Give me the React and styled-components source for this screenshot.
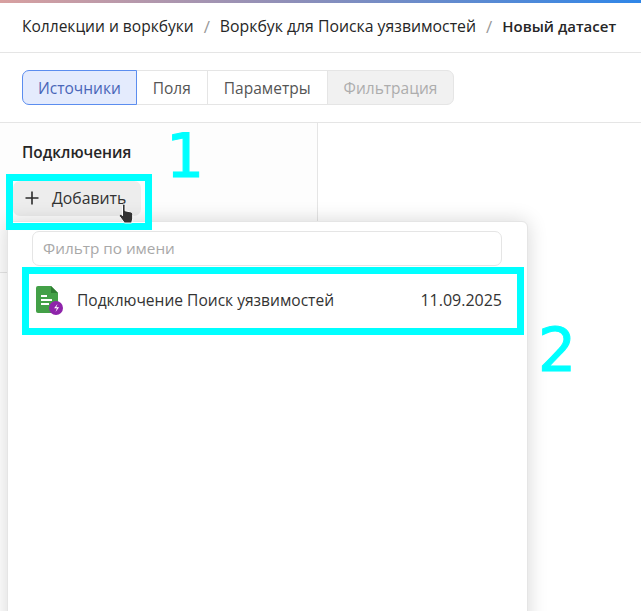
import React from "react";
import styled, { createGlobalStyle } from "styled-components";

const Global = createGlobalStyle`
  html, body { margin: 0; padding: 0; background: #fff; }
  body { font-family: "Open Sans", "Noto Sans", sans-serif; overflow: hidden; }
`;
const Page = styled.div`
  position: relative;
  width: 641px;
  height: 611px;
  overflow: hidden;
  background: #fff;
  color: #2b2b2b;
`;
const TopStripe = styled.div`
  height: 3px;
  background: linear-gradient(90deg, #d8a0a0 0%, #8f8fb8 45%, #2f86e8 100%);
`;
const Breadcrumbs = styled.nav`
  height: 50px;
  box-sizing: border-box;
  border-bottom: 1px solid #e5e5e5;
  padding: 0 0 3px 22px;
  display: flex;
  align-items: center;
`;
const Crumb = styled.span`
  font-weight: ${(p) => (p.$current ? 600 : 400)};
  font-size: ${(p) => p.$size}px;
  color: #262626;
  white-space: nowrap;
`;
const Slash = styled.span`
  color: #999;
  margin: 0 10px;
  font-size: 17px;
`;
const TabsRow = styled.div`
  height: 70px;
  box-sizing: border-box;
  border-bottom: 1px solid #e5e5e5;
  padding: 17px 0 0 22px;
  display: flex;
  align-items: flex-start;
`;
const Tab = styled.div`
  height: 35px;
  box-sizing: border-box;
  display: flex;
  align-items: center;
  padding: 0 ${(p) => (p.$first ? 15 : 16)}px;
  font-size: 15.5px;
  white-space: nowrap;
  margin-left: -1px;
  border: 1px solid ${(p) => (p.$active ? "#5b8def" : "#e5e5e5")};
  background: ${(p) => (p.$active ? "#e4ebfd" : p.$disabled ? "#f1f1f1" : "#fff")};
  color: ${(p) => (p.$active ? "#4a66b8" : p.$disabled ? "#adadad" : "#555")};
  border-radius: ${(p) => (p.$first ? "7px 0 0 7px" : p.$last ? "0 7px 7px 0" : "0")};
  position: relative;
  z-index: ${(p) => (p.$active ? 1 : 0)};
  &:first-child { margin-left: 0; }
`;
const Body = styled.div`
  display: flex;
  height: 488px;
`;
const Sidebar = styled.aside`
  width: 318px;
  height: 150px;
  box-sizing: border-box;
  border-right: 1px solid #e5e5e5;
  border-bottom: 1px solid #e5e5e5;
  background: #fdfdfd;
  padding: 20px 0 0 22px;
`;
const SectionTitle = styled.div`
  font-size: 15.4px;
  line-height: 20px;
  font-weight: 600;
  color: #262626;
`;
const AddButton = styled.div`
  width: 128px;
  height: 35px;
  margin: 18px 0 0 -9px;
  padding: 0 0 1px 11px;
  box-sizing: border-box;
  background: #ededed;
  border-radius: 7px;
  display: flex;
  align-items: center;
  gap: 12px;
  font-size: 15.8px;
  color: #333;
`;
const Popup = styled.div`
  position: absolute;
  left: 7px;
  top: 221px;
  width: 521px;
  height: 420px;
  box-sizing: border-box;
  background: #fff;
  border: 1px solid #e5e5e5;
  border-radius: 6px;
  box-shadow: 0 0 20px rgba(0, 0, 0, 0.16);
  padding: 9px 25px 0 24px;
`;
const FilterInput = styled.div`
  height: 35px;
  box-sizing: border-box;
  border: 1px solid #e5e5e5;
  border-radius: 7px;
  padding: 0 10px 2px;
  display: flex;
  align-items: center;
  font-size: 15.3px;
  color: #a8a8a8;
`;
const ConnRow = styled.div`
  height: 50px;
  margin-top: 9px;
  padding-left: 3px;
  display: flex;
  align-items: center;
  font-size: 15.55px;
  color: #333;
`;
const ConnName = styled.span`
  margin-left: 12px;
  flex: 1;
  white-space: nowrap;
`;
const ConnDate = styled.span`
  font-size: 16px;
  white-space: nowrap;
`;
const Annotation = styled.div`
  position: absolute;
  box-sizing: border-box;
  border: 7px solid #00ffff;
  left: ${(p) => p.$x}px;
  top: ${(p) => p.$y}px;
  width: ${(p) => p.$w}px;
  height: ${(p) => p.$h}px;
`;
const Numeral = styled.div`
  position: absolute;
  left: ${(p) => p.$x}px;
  top: ${(p) => p.$y}px;
  font-size: 60px;
  line-height: 60px;
  font-family: "DejaVu Sans", sans-serif;
  color: #00ffff;
  -webkit-text-stroke: 1px #00ffff;
`;
const Cursor = styled.svg`
  position: absolute;
  left: 118px;
  top: 203px;
`;

const FileIcon = () => (
  <svg width="30" height="30" viewBox="0 0 30 30">
    <path d="M3 1h13l7 7v18a2 2 0 0 1-2 2H3a2 2 0 0 1-2-2V3a2 2 0 0 1 2-2z" fill="#43a047" />
    <path d="M16 1l7 7h-7z" fill="#2e7d32" />
    <path d="M6 11h6M6 15h11M6 19h8" stroke="#fff" strokeWidth="2" fill="none" />
    <circle cx="21" cy="23" r="7" fill="#8e24aa" />
    <path d="M22.5 19l-3.4 4.2h2.8l-1.4 3.8 3.6-4.8h-2.8z" fill="#fff" />
  </svg>
);
const HandCursor = () => (
  <Cursor width="18" height="22" viewBox="0 0 18 22">
    <path d="M4.5 2.2c0-1.6 2.6-1.6 2.6 0v5.6l5.2 1c1.6.4 2.4 1.4 2.4 2.8v4.4L13.6 20H6.4L1.6 13.4c-1-1.5.8-2.9 2-1.7l.9 1z" fill="#333" stroke="#fff" strokeWidth="1" />
  </Cursor>
);
const Plus = () => (
  <svg width="16" height="16" viewBox="0 0 16 16">
    <path d="M8 1.5v13M1.5 8h13" stroke="#2b2b2b" strokeWidth="1.6" />
  </svg>
);

export default function App() {
  return (
    <Page>
      <Global />
      <TopStripe />
      <Breadcrumbs>
        <Crumb $size={15.55}>Коллекции и воркбуки</Crumb>
        <Slash>/</Slash>
        <Crumb $size={15.8}>Воркбук для Поиска уязвимостей</Crumb>
        <Slash>/</Slash>
        <Crumb $size={15} $current>Новый датасет</Crumb>
      </Breadcrumbs>
      <TabsRow>
        <Tab $active $first>Источники</Tab>
        <Tab>Поля</Tab>
        <Tab>Параметры</Tab>
        <Tab $disabled $last>Фильтрация</Tab>
      </TabsRow>
      <Body>
        <Sidebar>
          <SectionTitle>Подключения</SectionTitle>
          <AddButton><Plus />Добавить</AddButton>
        </Sidebar>
      </Body>
      <Popup>
        <FilterInput>Фильтр по имени</FilterInput>
        <ConnRow>
          <FileIcon />
          <ConnName>Подключение Поиск уязвимостей</ConnName>
          <ConnDate>11.09.2025</ConnDate>
        </ConnRow>
      </Popup>
      <Annotation $x={6} $y={174} $w={146} $h={56} />
      <Annotation $x={22} $y={267} $w={502} $h={68} />
      <Numeral $x={166} $y={126}>1</Numeral>
      <Numeral $x={538} $y={320}>2</Numeral>
      <HandCursor />
    </Page>
  );
}
